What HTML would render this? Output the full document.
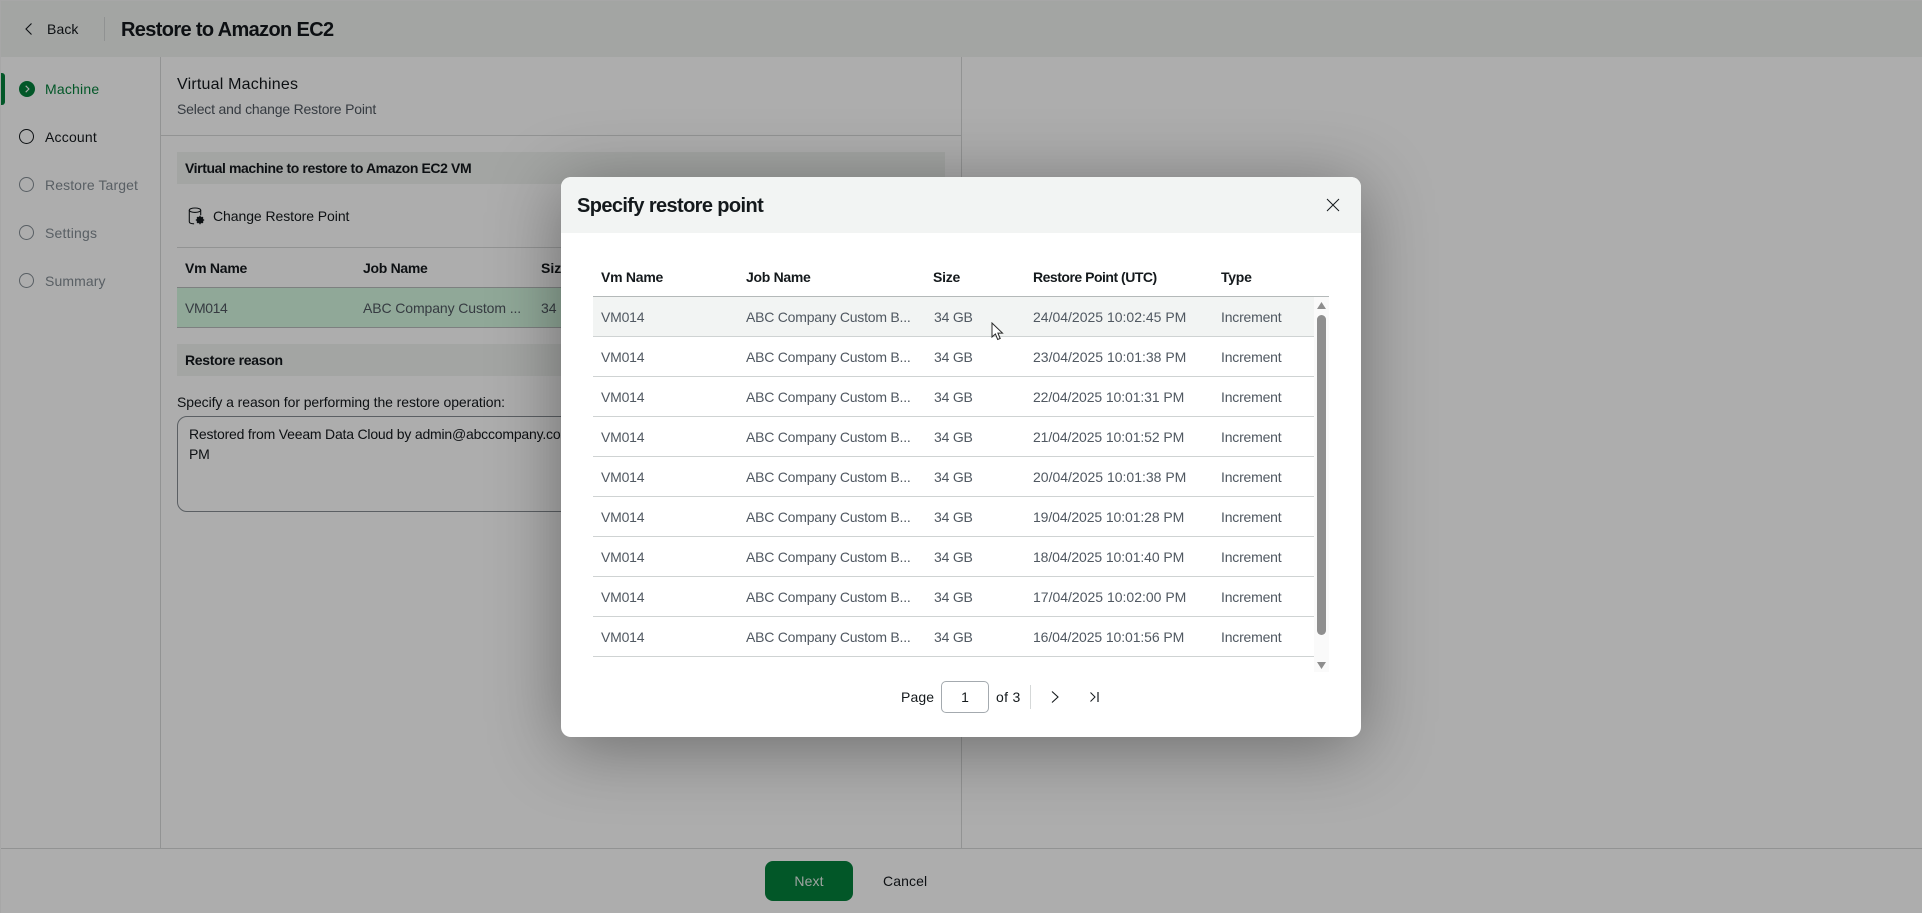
<!DOCTYPE html>
<html><head><meta charset="utf-8"><title>Restore to Amazon EC2</title>
<style>
html,body{margin:0;padding:0;width:1922px;height:913px;overflow:hidden;background:#fff}
body{position:relative;font-family:"Liberation Sans",sans-serif;font-size:14px;color:#14191c}
.a{position:absolute}
.t{position:absolute;white-space:nowrap;line-height:20px;height:20px}
.b{font-weight:bold}
.c{position:absolute;left:19px;width:13px;height:13px;border:1.5px solid #14191c;border-radius:50%}
.dis{color:#838c94;border-color:#838c94}
#ov{position:absolute;left:0;top:0;width:1922px;height:913px;background:rgba(0,0,0,.32)}
#m{position:absolute;left:561px;top:177px;width:800px;height:560px;background:#fff;border-radius:10px;box-shadow:0 10px 70px rgba(0,0,0,.38);overflow:hidden}
.row{position:absolute;left:32px;width:721px;height:39px;border-bottom:1px solid #cfd3d3}
.row span{position:absolute;top:10px;line-height:20px;white-space:nowrap;color:#505861}
.s1{left:8px;letter-spacing:-.2px}.s2{left:153px;letter-spacing:-.22px}.s3{left:341px;letter-spacing:-.2px}.s4{left:440px;letter-spacing:0}.s5{left:628px;letter-spacing:-.2px}
.h{position:absolute;top:90px;line-height:20px;font-weight:bold;color:#14191c;white-space:nowrap;letter-spacing:-.25px}
</style></head><body>
<!-- page -->
<div class="a" style="left:0;top:0;width:1922px;height:57px;background:#f0f3f1"></div>
<div class="a" style="left:104px;top:17px;width:1px;height:24px;background:#d5d8d8"></div>
<svg class="a" style="left:22px;top:21px" width="14" height="16" viewBox="0 0 14 16"><path d="M9.5 2.5 4 8l5.5 5.5" fill="none" stroke="#14191c" stroke-width="1.1"/></svg>
<div class="t" style="left:47px;top:19px;letter-spacing:.1px">Back</div>
<div class="t b" style="left:121px;top:20px;font-size:20px;letter-spacing:-.64px;font-weight:bold">Restore to Amazon EC2</div>

<div class="a" style="left:160px;top:57px;width:1px;height:792px;background:#d7d9d9"></div>
<div class="a" style="left:961px;top:57px;width:1px;height:792px;background:#d7d9d9"></div>
<div class="a" style="left:0;top:848px;width:1922px;height:1px;background:#d7d9d9"></div>
<div class="a" style="left:0;top:0;width:1px;height:913px;background:#f6f6f6"></div>
<div class="a" style="left:0;top:0;width:1922px;height:1px;background:#f6f6f6"></div>

<!-- steps -->
<div class="a" style="left:1px;top:73px;width:4px;height:32px;background:#04803b;border-radius:0 3px 3px 0"></div>
<div class="a" style="left:19px;top:81px;width:16px;height:16px;background:#04803b;border-radius:50%"></div>
<svg class="a" style="left:19px;top:81px" width="16" height="16" viewBox="0 0 16 16"><path d="M6.7 4.8 9.9 8l-3.2 3.2" fill="none" stroke="#fff" stroke-width="1.1"/></svg>
<div class="t" style="left:45px;top:79px;color:#04803b;letter-spacing:.2px">Machine</div>
<div class="c" style="top:129px"></div>
<div class="t" style="left:45px;top:127px;letter-spacing:.2px">Account</div>
<div class="c dis" style="top:177px"></div>
<div class="t dis" style="left:45px;top:175px;letter-spacing:.1px">Restore Target</div>
<div class="c dis" style="top:225px"></div>
<div class="t dis" style="left:45px;top:223px;letter-spacing:.2px">Settings</div>
<div class="c dis" style="top:273px"></div>
<div class="t dis" style="left:45px;top:271px;letter-spacing:.1px">Summary</div>

<!-- main -->
<div class="t" style="left:177px;top:75px;font-size:16px;letter-spacing:.2px">Virtual Machines</div>
<div class="t" style="left:177px;top:99px;color:#505861;letter-spacing:-.18px">Select and change Restore Point</div>
<div class="a" style="left:161px;top:135px;width:800px;height:1px;background:#d7d9d9"></div>
<div class="a" style="left:177px;top:152px;width:768px;height:32px;background:#f0f3f1"></div>
<div class="t b" style="left:185px;top:158px;letter-spacing:-.4px">Virtual machine to restore to Amazon EC2 VM</div>
<svg class="a" style="left:187px;top:207px" width="20" height="20" viewBox="0 0 20 20" fill="none" stroke="#14191c" stroke-width="1.1"><ellipse cx="8" cy="3.2" rx="5.7" ry="2.2"/><path d="M2.3 3.2v11.6c0 1.3 2.2 2 4.8 2M13.7 3.2v5"/><circle cx="13" cy="13" r="2.6" stroke-width="1.9"/><path d="M13 8.8v8.4M8.8 13h8.4M10 10l6 6M16 10l-6 6" stroke-width="1.2"/></svg>
<div class="t" style="left:213px;top:206px;letter-spacing:-.07px">Change Restore Point</div>
<div class="a" style="left:177px;top:247px;width:768px;height:1px;background:#d7d9d9"></div>
<div class="t b" style="left:185px;top:258px;letter-spacing:-.25px">Vm Name</div>
<div class="t b" style="left:363px;top:258px;letter-spacing:-.3px">Job Name</div>
<div class="t b" style="left:541px;top:258px">Size</div>
<div class="a" style="left:177px;top:287px;width:768px;height:41px;background:#d4f8e1;box-sizing:border-box;border-top:1px solid #b9bdbd;border-bottom:1px solid #b9bdbd"></div>
<div class="t" style="left:185px;top:298px;color:#505861;letter-spacing:-.4px">VM014</div>
<div class="t" style="left:363px;top:298px;color:#505861;letter-spacing:-.1px">ABC Company Custom ...</div>
<div class="t" style="left:541px;top:298px;color:#505861">34 GB</div>
<div class="a" style="left:177px;top:344px;width:768px;height:32px;background:#f0f3f1"></div>
<div class="t b" style="left:185px;top:350px;letter-spacing:-.3px">Restore reason</div>
<div class="t" style="left:177px;top:392px;letter-spacing:-.08px">Specify a reason for performing the restore operation:</div>
<div class="a" style="left:177px;top:416px;width:768px;height:96px;box-sizing:border-box;border:1px solid #868d93;border-radius:10px"></div>
<div class="t" style="left:189px;top:424px;letter-spacing:-.2px">Restored from Veeam Data Cloud by admin@abccompany.com</div>
<div class="t" style="left:189px;top:444px;letter-spacing:-.2px">PM</div>

<!-- footer -->
<div class="a" style="left:765px;top:861px;width:88px;height:40px;background:#04803b;border-radius:8px"></div>
<div class="t" style="left:765px;top:871px;width:88px;text-align:center;color:#e6f0ea;letter-spacing:.1px">Next</div>
<div class="t" style="left:883px;top:871px;letter-spacing:.1px">Cancel</div>

<div id="ov"></div>

<!-- modal -->
<div id="m">
  <div class="a" style="left:0;top:0;width:800px;height:56px;background:#f2f4f3"></div>
  <div class="t b" style="left:16px;top:19px;font-size:20px;letter-spacing:-.61px;color:#14191c">Specify restore point</div>
  <svg class="a" style="left:765px;top:21px" width="14" height="14" viewBox="0 0 14 14"><path d="M1 1l12 12M13 1 1 13" fill="none" stroke="#14191c" stroke-width="1"/></svg>

  <div class="h" style="left:40px">Vm Name</div>
  <div class="h" style="left:185px;letter-spacing:-.3px">Job Name</div>
  <div class="h" style="left:372px">Size</div>
  <div class="h" style="left:472px;letter-spacing:-.49px">Restore Point (UTC)</div>
  <div class="h" style="left:660px">Type</div>
  <div class="a" style="left:32px;top:119px;width:736px;height:1px;background:#b4b9b9"></div>

  <div class="row" style="top:120px;height:39px;background:#f2f4f3"><span class="s1">VM014</span><span class="s2">ABC Company Custom B...</span><span class="s3">34 GB</span><span class="s4">24/04/2025 10:02:45 PM</span><span class="s5">Increment</span></div>
  <div class="row" style="top:160px"><span class="s1">VM014</span><span class="s2">ABC Company Custom B...</span><span class="s3">34 GB</span><span class="s4">23/04/2025 10:01:38 PM</span><span class="s5">Increment</span></div>
  <div class="row" style="top:200px"><span class="s1">VM014</span><span class="s2">ABC Company Custom B...</span><span class="s3">34 GB</span><span class="s4" style="letter-spacing:-.1px">22/04/2025 10:01:31 PM</span><span class="s5">Increment</span></div>
  <div class="row" style="top:240px"><span class="s1">VM014</span><span class="s2">ABC Company Custom B...</span><span class="s3">34 GB</span><span class="s4" style="letter-spacing:-.1px">21/04/2025 10:01:52 PM</span><span class="s5">Increment</span></div>
  <div class="row" style="top:280px"><span class="s1">VM014</span><span class="s2">ABC Company Custom B...</span><span class="s3">34 GB</span><span class="s4">20/04/2025 10:01:38 PM</span><span class="s5">Increment</span></div>
  <div class="row" style="top:320px"><span class="s1">VM014</span><span class="s2">ABC Company Custom B...</span><span class="s3">34 GB</span><span class="s4" style="letter-spacing:-.1px">19/04/2025 10:01:28 PM</span><span class="s5">Increment</span></div>
  <div class="row" style="top:360px"><span class="s1">VM014</span><span class="s2">ABC Company Custom B...</span><span class="s3">34 GB</span><span class="s4" style="letter-spacing:-.1px">18/04/2025 10:01:40 PM</span><span class="s5">Increment</span></div>
  <div class="row" style="top:400px"><span class="s1">VM014</span><span class="s2">ABC Company Custom B...</span><span class="s3">34 GB</span><span class="s4">17/04/2025 10:02:00 PM</span><span class="s5">Increment</span></div>
  <div class="row" style="top:440px"><span class="s1">VM014</span><span class="s2">ABC Company Custom B...</span><span class="s3">34 GB</span><span class="s4" style="letter-spacing:-.1px">16/04/2025 10:01:56 PM</span><span class="s5">Increment</span></div>

  <!-- scrollbar -->
  <div class="a" style="left:753px;top:120px;width:15px;height:375px;background:#fafafa"></div>
  <svg class="a" style="left:753px;top:120px" width="15" height="375" viewBox="0 0 15 375"><path d="M3 12 7.5 5l4.5 7zM3 365h9l-4.5 7z" fill="#8e8e8e"/></svg>
  <div class="a" style="left:756px;top:138px;width:9px;height:320px;background:#8f8f8f;border-radius:5px"></div>

  <!-- pager -->
  <div class="t" style="left:340px;top:510px;color:#14191c;letter-spacing:.1px">Page</div>
  <div class="a" style="left:380px;top:504px;width:48px;height:32px;box-sizing:border-box;border:1px solid #a4aaaf;border-radius:5px"></div>
  <div class="t" style="left:380px;top:510px;width:48px;text-align:center">1</div>
  <div class="t" style="left:435px;top:510px;letter-spacing:.3px">of 3</div>
  <div class="a" style="left:469px;top:508px;width:1px;height:24px;background:#d5d8d8"></div>
  <svg class="a" style="left:487px;top:512px" width="14" height="16" viewBox="0 0 14 16"><path d="M4 2.5 10 8l-6 5.5" fill="none" stroke="#14191c" stroke-width="1.1"/></svg>
  <svg class="a" style="left:527px;top:512px" width="14" height="16" viewBox="0 0 14 16"><path d="M2.5 3.5 7 8l-4.5 4.5" fill="none" stroke="#14191c" stroke-width="1"/><path d="M10 3v10" stroke="#14191c" stroke-width="1.2"/></svg>
</div>

<!-- cursor -->
<svg class="a" style="left:991px;top:322px" width="14" height="20" viewBox="0 0 14 20"><path d="M1 1v14l3.4-3 2.3 5.5 2.5-1-2.3-5.4h4.6z" fill="#fff" stroke="#2a2a2a" stroke-width="1"/></svg>
</body></html>
